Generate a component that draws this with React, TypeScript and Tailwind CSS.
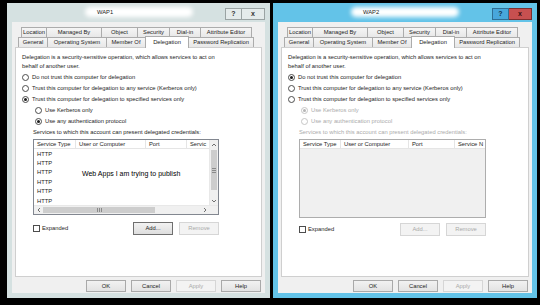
import React from 'react';

type Tab = { label: string; w: string; active?: boolean };

const ROW1: Tab[] = [
  { label: 'Location', w: 'w-[26px]' },
  { label: 'Managed By', w: 'w-[56px]' },
  { label: 'Object', w: 'w-[37px]' },
  { label: 'Security', w: 'w-[33px]' },
  { label: 'Dial-in', w: 'w-[32px]' },
  { label: 'Attribute Editor', w: 'w-[52px]' },
];

const ROW2: Tab[] = [
  { label: 'General', w: 'w-[30px]' },
  { label: 'Operating System', w: 'w-[60px]' },
  { label: 'Member Of', w: 'w-[40px]' },
  { label: 'Delegation', w: 'w-[44px]', active: true },
  { label: 'Password Replication', w: 'w-[66px]' },
];

const Radio = ({ checked, disabled, label }: { checked?: boolean; disabled?: boolean; label: string }) => (
  <div className="flex items-center h-[11px] gap-[3px] whitespace-nowrap">
    <span
      className={`w-[7px] h-[7px] rounded-full border bg-white flex items-center justify-center ${
        disabled ? 'border-[#c6c6c6]' : 'border-[#4d4d4d]'
      }`}
    >
      {checked && <span className={`w-[3px] h-[3px] rounded-full ${disabled ? 'bg-[#b5b5b5]' : 'bg-[#1c1c1c]'}`} />}
    </span>
    <span className={disabled ? 'text-[#ababab]' : 'text-[#1c1c1c]'}>{label}</span>
  </div>
);

const Btn = ({ label, disabled, focus }: { label: string; disabled?: boolean; focus?: boolean }) => (
  <div
    className={`w-[40px] h-full flex items-center justify-center border ${
      disabled
        ? 'border-[#d6d6d6] bg-[#f3f3f3] text-[#a9a9a9]'
        : focus
        ? 'border-[#6f6f6f] bg-gradient-to-b from-[#f2f2f2] to-[#dedede] text-[#1c1c1c]'
        : 'border-[#a9a9a9] bg-gradient-to-b from-[#f2f2f2] to-[#e3e3e3] text-[#1c1c1c]'
    }`}
  >
    {label}
  </div>
);

const Chevron = ({ dir }: { dir: 'up' | 'down' | 'left' | 'right' }) => {
  const pts = {
    up: '1,4 3,2 5,4',
    down: '1,2 3,4 5,2',
    left: '4,1 2,3 4,5',
    right: '2,1 4,3 2,5',
  }[dir];
  return (
    <svg width="6" height="6" viewBox="0 0 6 6">
      <polyline points={pts} fill="none" stroke="#606060" strokeWidth="0.9" />
    </svg>
  );
};

const Header = ({ cols }: { cols: [string, string][] }) => (
  <div className="flex h-[9px] bg-white border-b border-[#e5e5e5] whitespace-nowrap">
    {cols.map(([label, w], i) => (
      <div key={i} className={`${w} h-full flex items-center pl-[3px] overflow-hidden border-r border-[#e5e5e5] text-[#1c1c1c]`}>
        {label}
      </div>
    ))}
  </div>
);

const LeftList = () => (
  <div className="mt-[2px] w-[186px] h-[76px] border border-[#828790] bg-white flex flex-col">
    <div className="flex flex-1 min-h-0">
      <div className="flex-1 flex flex-col overflow-hidden relative">
        <Header
          cols={[
            ['Service Type', 'w-[42px]'],
            ['User or Computer', 'w-[70px]'],
            ['Port', 'w-[41px]'],
            ['Servic', 'flex-1 border-r-0'],
          ]}
        />
        <div className="flex flex-col pl-[3px] pt-[0.5px] leading-[9.4px] text-[#1c1c1c]">
          {[0, 1, 2, 3, 4, 5].map((i) => (
            <div key={i}>HTTP</div>
          ))}
        </div>
        <div className="absolute left-[48px] top-[29px] text-[7px] text-black whitespace-nowrap">Web Apps I am trying to publish</div>
      </div>
      <div className="w-[9px] flex flex-col bg-[#f0f0f0] border-l border-[#e8e8e8]">
        <div className="h-[9px] flex items-center justify-center">
          <Chevron dir="up" />
        </div>
        <div className="mt-[1px] h-[40px] mx-[1px] bg-[#cdcdcd] flex flex-col items-center justify-center gap-[1px]">
          <span className="w-[4px] h-px bg-[#8a8a8a]" />
          <span className="w-[4px] h-px bg-[#8a8a8a]" />
          <span className="w-[4px] h-px bg-[#8a8a8a]" />
        </div>
        <div className="flex-1" />
        <div className="h-[9px] flex items-center justify-center">
          <Chevron dir="down" />
        </div>
      </div>
    </div>
    <div className="flex h-[9px] bg-[#f0f0f0] border-t border-[#e8e8e8]">
      <div className="w-[9px] flex items-center justify-center">
        <Chevron dir="left" />
      </div>
      <div className="w-[112px] my-[1px] bg-[#cdcdcd] flex items-center justify-center gap-[1px]">
        <span className="w-px h-[4px] bg-[#8a8a8a]" />
        <span className="w-px h-[4px] bg-[#8a8a8a]" />
        <span className="w-px h-[4px] bg-[#8a8a8a]" />
      </div>
      <div className="flex-1" />
      <div className="w-[9px] flex items-center justify-center">
        <Chevron dir="right" />
      </div>
      <div className="w-[9px] bg-[#f0f0f0]" />
    </div>
  </div>
);

const RightList = () => (
  <div className="mt-[2px] w-[187px] h-[79px] border border-[#adadad] bg-[#f0f0f0] flex flex-col">
    <Header
      cols={[
        ['Service Type', 'w-[41px]'],
        ['User or Computer', 'w-[68px]'],
        ['Port', 'w-[46px]'],
        ['Service N', 'flex-1 border-r-0'],
      ]}
    />
  </div>
);

const Dialog = ({ active }: { active?: boolean }) => (
  <div className={`${active ? 'w-[264px] bg-[#63c3e8]' : 'w-[263px] bg-[#d5e1e1]'} h-[295px] flex flex-col px-[5px] pb-[5px]`}>
    {/* Title bar */}
    <div className="h-[19px] flex relative shrink-0">
      <div className="absolute left-[73px] top-[4px] w-[108px] h-[10px] rounded-full bg-white blur-[2px]" />
      <div className="relative ml-[85px] mt-[5px] text-[5.8px] leading-[9px] text-[#1c1c1c]">{active ? 'WAP2' : 'WAP1'}</div>
      <div className="ml-auto mt-[5px] h-[12px] flex">
        <div
          className={`w-[17px] h-full flex items-center justify-center border text-[7px] font-bold ${
            active ? 'bg-[#48a7dc] border-[#2f6f95] text-[#12324a]' : 'bg-[#e4ebeb] border-[#9aa3a3] text-[#333]'
          }`}
        >
          ?
        </div>
        <div
          className={`w-[23px] h-full flex items-center justify-center border border-l-0 text-[7px] font-bold ${
            active ? 'bg-[#c75050] border-[#7e2e2e] text-[#3a0f0f]' : 'bg-[#e4ebeb] border-[#9aa3a3] text-[#333]'
          }`}
        >
          x
        </div>
      </div>
    </div>

    {/* Client area */}
    <div className="flex-1 bg-[#f0f0f0] flex flex-col px-[3px] pt-[5px] pb-[1px] text-[5.8px] leading-[9px]">
      <div className="flex pl-[6px] h-[10px] whitespace-nowrap">
        {ROW1.map((t) => (
          <div key={t.label} className={`${t.w} -mr-px border border-b-0 border-[#acacac] bg-gradient-to-b from-[#f5f5f5] to-[#e8e8e8] flex items-center justify-center text-[#1c1c1c]`}>
            {t.label}
          </div>
        ))}
      </div>
      <div className="flex pl-[3px] h-[10px] whitespace-nowrap">
        {ROW2.map((t) =>
          t.active ? (
            <div key={t.label} className={`${t.w} -mr-px -mt-[1px] h-[12px] relative z-10 border border-b-0 border-[#acacac] bg-white flex items-center justify-center text-[#1c1c1c]`}>
              {t.label}
            </div>
          ) : (
            <div key={t.label} className={`${t.w} -mr-px border border-b-0 border-[#acacac] bg-gradient-to-b from-[#f5f5f5] to-[#e8e8e8] flex items-center justify-center text-[#1c1c1c]`}>
              {t.label}
            </div>
          )
        )}
      </div>

      {/* Panel */}
      <div className="h-[230px] bg-white border border-[#cfcfcf] px-[6px] pt-[5px] text-[#1c1c1c]">
        <div className="whitespace-nowrap">
          Delegation is a security-sensitive operation, which allows services to act on
          <br />
          behalf of another user.
        </div>
        <div className="mt-[1px] flex flex-col">
          <Radio checked={active} label="Do not trust this computer for delegation" />
          <Radio label="Trust this computer for delegation to any service (Kerberos only)" />
          <Radio checked={!active} label="Trust this computer for delegation to specified services only" />
          <div className="pl-[13px] flex flex-col">
            <Radio disabled={active} checked={active} label="Use Kerberos only" />
            <Radio disabled={active} checked={!active} label="Use any authentication protocol" />
          </div>
        </div>
        <div className="pl-[11px] flex flex-col">
          <div className={`h-[10px] flex items-center whitespace-nowrap ${active ? 'text-[#ababab]' : ''}`}>
            Services to which this account can present delegated credentials:
          </div>
          {active ? <RightList /> : <LeftList />}
          <div className={`${active ? 'mt-[5px] w-[187px]' : 'mt-[7px] w-[186px]'} h-[13px] flex items-center`}>
            <span className="w-[7px] h-[7px] border border-[#4d4d4d] bg-white" />
            <span className="ml-[2px]">Expanded</span>
            <div className="ml-auto h-full flex gap-[6px]">
              <Btn label="Add..." disabled={active} focus={!active} />
              <Btn label="Remove" disabled />
            </div>
          </div>
        </div>
      </div>

      {/* Footer buttons */}
      <div className="mt-[3px] h-[12px] flex justify-end gap-[5px] pr-[1px]">
        <Btn label="OK" />
        <Btn label="Cancel" />
        <Btn label="Apply" disabled />
        <Btn label="Help" />
      </div>
    </div>
  </div>
);

export default function App() {
  return (
    <div className="w-[540px] h-[305px] bg-black flex pt-[3px] pl-[7px] gap-[3px] font-['Liberation_Sans',Arial,sans-serif] overflow-hidden">
      <Dialog />
      <Dialog active />
    </div>
  );
}
